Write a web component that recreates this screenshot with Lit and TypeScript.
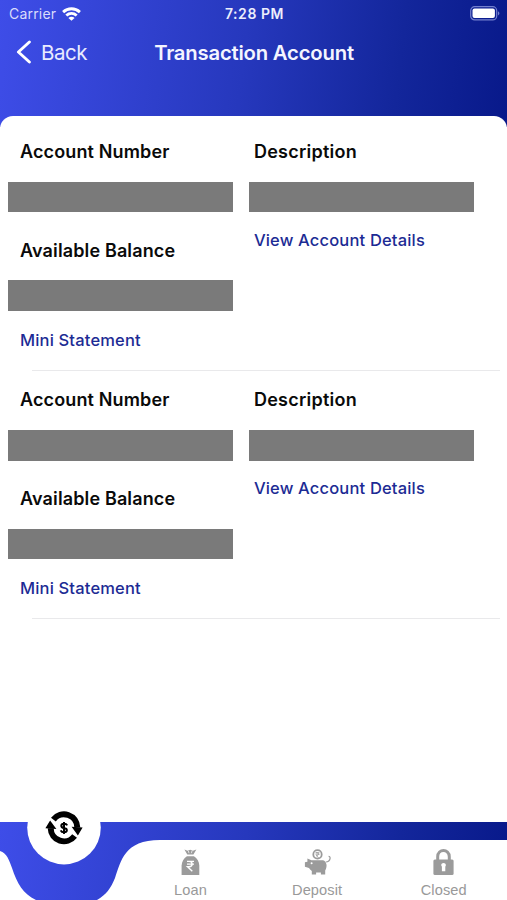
import { LitElement, html, css, svg } from "lit";
import { customElement, property } from "lit/decorators.js";

@customElement("status-bar")
class StatusBar extends LitElement {
  static styles = css`
    :host {
      display: grid;
      grid-template-columns: 1fr auto 1fr;
      align-items: center;
      height: 27px;
      padding: 0 7px 0 9px;
      color: #fff;
      font-size: 14px;
      line-height: 27px;
    }
    .carrier { display: flex; align-items: center; gap: 6px; color: #d9dcfb; letter-spacing: 0.2px; }
    .time { font-weight: 600; font-size: 14px; letter-spacing: 0.55px; color: #eceefc; }
    .battery { justify-self: end; display: block; }
    svg { display: block; }
  `;
  render() {
    return html`
      <div class="carrier">
        <span>Carrier</span>
        <svg width="19" height="14" viewBox="0 0 19 14" fill="none" stroke="#fff" stroke-width="2.9">
          <path d="M1.1 5.1C5.9 .7 13.1 .7 17.9 5.1" />
          <path d="M4.3 8.5C7.3 5.9 11.7 5.9 14.7 8.5" />
          <path d="M9.5 13.8 6.4 10.9C8.2 9.3 10.8 9.3 12.6 10.9Z" fill="#fff" stroke="none" />
        </svg>
      </div>
      <span class="time">7:28 PM</span>
      <svg class="battery" width="30" height="15" viewBox="0 0 30 15">
        <rect x=".7" y=".7" width="26" height="13.2" rx="4" fill="none" stroke="#7480ce" stroke-width="1.2" />
        <rect x="2.5" y="2.5" width="22.4" height="9.6" rx="2" fill="#fff" />
        <path d="M28 5.2c1.9.9 1.9 3.3 0 4.2z" fill="#7480ce" />
      </svg>
    `;
  }
}

@customElement("account-item")
class AccountItem extends LitElement {
  static styles = css`
    :host { display: block; }
    .columns { display: grid; grid-template-columns: 225px 225px; gap: 16px; padding-left: 8.4px; height: 247px; }
    .label, .link { padding-left: 11.6px; height: 30px; line-height: 30px; white-space: nowrap; }
    .description .label, .description .link { padding-left: 4.5px; }
    .label { color: #0a0a0a; font-weight: 600; font-size: 18px; letter-spacing: 0.14px; padding-top: 14.2px; }
    .description .label { letter-spacing: 0.25px; }
    .link { color: #1c2b94; font-weight: 500; font-size: 16.5px; letter-spacing: 0.17px; }
    .mask { height: 30.4px; margin-top: 15.3px; background: #7a7a7a; }
    .balance { padding-top: 23.4px; }
    .mask.second { margin-top: 14.5px; }
    .link.mini { margin-top: 14.2px; }
    .link.details { margin-top: 12.6px; }
    .rule { height: 1.4px; margin: 0 7px 0 32px; background: #e9e9eb; }
  `;
  render() {
    return html`
      <div class="columns">
        <div>
          <div class="label">Account Number</div>
          <div class="mask"></div>
          <div class="label balance">Available Balance</div>
          <div class="mask second"></div>
          <div class="link mini">Mini Statement</div>
        </div>
        <div class="description">
          <div class="label">Description</div>
          <div class="mask"></div>
          <div class="link details">View Account Details</div>
        </div>
      </div>
      <div class="rule"></div>
    `;
  }
}

const tabIcons: Record<string, unknown> = {
  Loan: svg`
    <path d="M4.4.6 7.5 1.8 10.3.8 12.9 1.8 16.4.6 13.4 5.4H7.3Z" />
    <path d="M8.3 1.8 9 4.2M12 1.8 11.4 4.2" stroke="#fff" stroke-width=".7" />
    <path d="M6.9 7.2H13.9C17.3 9.3 19.1 12.5 19.3 16.5V26H1.6V16.5C1.8 12.5 3.7 9.3 6.9 7.2Z" />
    <path d="M7 12.4H14M7 15.1H14M7.2 12.4H9C13.2 12.4 13.2 17.7 9 17.7H7.5L12.3 22.2" fill="none" stroke="#fff" stroke-width="1.4" />
  `,
  Deposit: svg`
    <circle cx="13.5" cy="5.4" r="4.2" fill="none" stroke="#9b9b9b" stroke-width="1.8" />
    <path d="M11.5 3.7H15.4M11.5 5.2H15.4M12.2 3.7C15.6 3.7 15.6 6.6 12.2 6.6L14.6 8.7" fill="none" stroke="#9b9b9b" stroke-width=".9" />
    <path d="M3.4 9.6 7.5 11.2H19C22.8 12.2 23.7 17.5 21.2 21.4V25.4H16.9V23.6H12.1V25.4H7.8V22C6.5 21 5.6 20 5 18.9L.9 17.7V13.3L3.4 12.8Z" />
    <path d="M21.7 13C24 13 25.8 11.6 26.1 9.4C26.3 8 25.5 7.3 24.6 7.3" fill="none" stroke="#9b9b9b" stroke-width="1.2" />
    <circle cx="7.6" cy="14.2" r="1" fill="#fff" />
  `,
  Closed: svg`
    <path d="M4.7 12V7.8C4.7-.5 16.3-.5 16.3 7.8V12" fill="none" stroke="#9b9b9b" stroke-width="3" />
    <rect x=".4" y="10.6" width="20.2" height="15.4" rx="1.5" />
    <path d="M8.2 16.2C8.2 13.2 12.9 13.2 12.9 16.2L12.3 17.7V22.2H8.9V17.7Z" fill="#fff" />
  `,
};

@customElement("tab-item")
class TabItem extends LitElement {
  @property() label = "";
  @property({ type: Number }) width = 21;
  static styles = css`
    :host { display: flex; flex-direction: column; align-items: center; padding-top: 27px; color: #999; }
    svg { display: block; fill: #9b9b9b; }
    .name { margin-top: 5px; font: 14.6px/18px "Liberation Sans", Arial, sans-serif; letter-spacing: 0.1px; }
  `;
  render() {
    return html`
      <svg width=${this.width} height="26.5" viewBox="0 0 ${this.width} 26.5">${tabIcons[this.label]}</svg>
      <span class="name">${this.label}</span>
    `;
  }
}

@customElement("app-root")
class AppRoot extends LitElement {
  static styles = css`
    :host {
      display: flex;
      flex-direction: column;
      height: 900px;
      overflow: hidden;
      font-family: Inter, "Liberation Sans", sans-serif;
      background: #fff;
      --brand: linear-gradient(97deg, #3e4de8 0%, #2638bd 48%, #13269b 78%, #08198a 100%);
    }
    .top { height: 127px; flex: none; background: var(--brand); }
    .title-bar { display: grid; grid-template-columns: 1fr auto 1fr; align-items: center; height: 50px; padding: 0 15px 0 16px; color: #f4f5ff; }
    .back { display: flex; align-items: center; gap: 9px; font-size: 20.5px; letter-spacing: -0.5px; color: #e9ebff; }
    .title { font-size: 20.3px; font-weight: 600; letter-spacing: -0.2px; white-space: nowrap; }
    .sheet { flex: 1; box-sizing: border-box; margin-top: -11.5px; padding-top: 7px; border-radius: 13px 13px 0 0; background: #fff; }
    .tabs { position: relative; flex: none; height: 78px; background: var(--brand); }
    .curve { position: absolute; left: 0; top: -22px; }
    .items { position: relative; display: grid; grid-template-columns: repeat(3, 126.6px); justify-content: end; }
  `;
  render() {
    return html`
      <header class="top">
        <status-bar></status-bar>
        <div class="title-bar">
          <div class="back">
            <svg width="16" height="24" viewBox="0 0 16 24" fill="none" stroke="#fff" stroke-width="2.9" stroke-linecap="round" stroke-linejoin="round">
              <path d="M13.4 2 2.4 12 13.4 22" />
            </svg>
            <span>Back</span>
          </div>
          <div class="title">Transaction Account</div>
        </div>
      </header>
      <main class="sheet">
        <account-item></account-item>
        <account-item></account-item>
      </main>
      <nav class="tabs">
        <svg class="curve" width="507" height="100" viewBox="0 0 507 100">
          <g fill="#fff">
            <path d="M0 51C7 53 9 60 12 68C17 83 23 94 36 100H0Z" />
            <path d="M97 100C106 95 111 88 115 78C121 61 124 40 160 40H507V100Z" />
            <circle cx="64" cy="27.6" r="36.8" />
          </g>
          <path d="M53.4 19.6A13.3 13.3 0 0 1 77.3 27.5M74.6 36A13.3 13.3 0 0 1 50.7 28.2" fill="none" stroke="#000" stroke-width="6" />
          <path d="M71.6 26.8 82.6 27.6 77.9 35.4Z M56.4 29 45.4 28.2 50.1 20.6Z" fill="#000" />
          <path d="M67.2 25.4C66.6 24.2 65.5 23.8 64 23.8C60.4 23.8 60.4 27.5 64 28C67.8 28.5 67.8 32.2 64 32.2C62.3 32.2 61.2 31.5 60.7 30.3M64 21.9V34.1" fill="none" stroke="#000" stroke-width="2" />
        </svg>
        <div class="items">
          <tab-item label="Loan" width="21"></tab-item>
          <tab-item label="Deposit" width="27"></tab-item>
          <tab-item label="Closed" width="21"></tab-item>
        </div>
      </nav>
    `;
  }
}
